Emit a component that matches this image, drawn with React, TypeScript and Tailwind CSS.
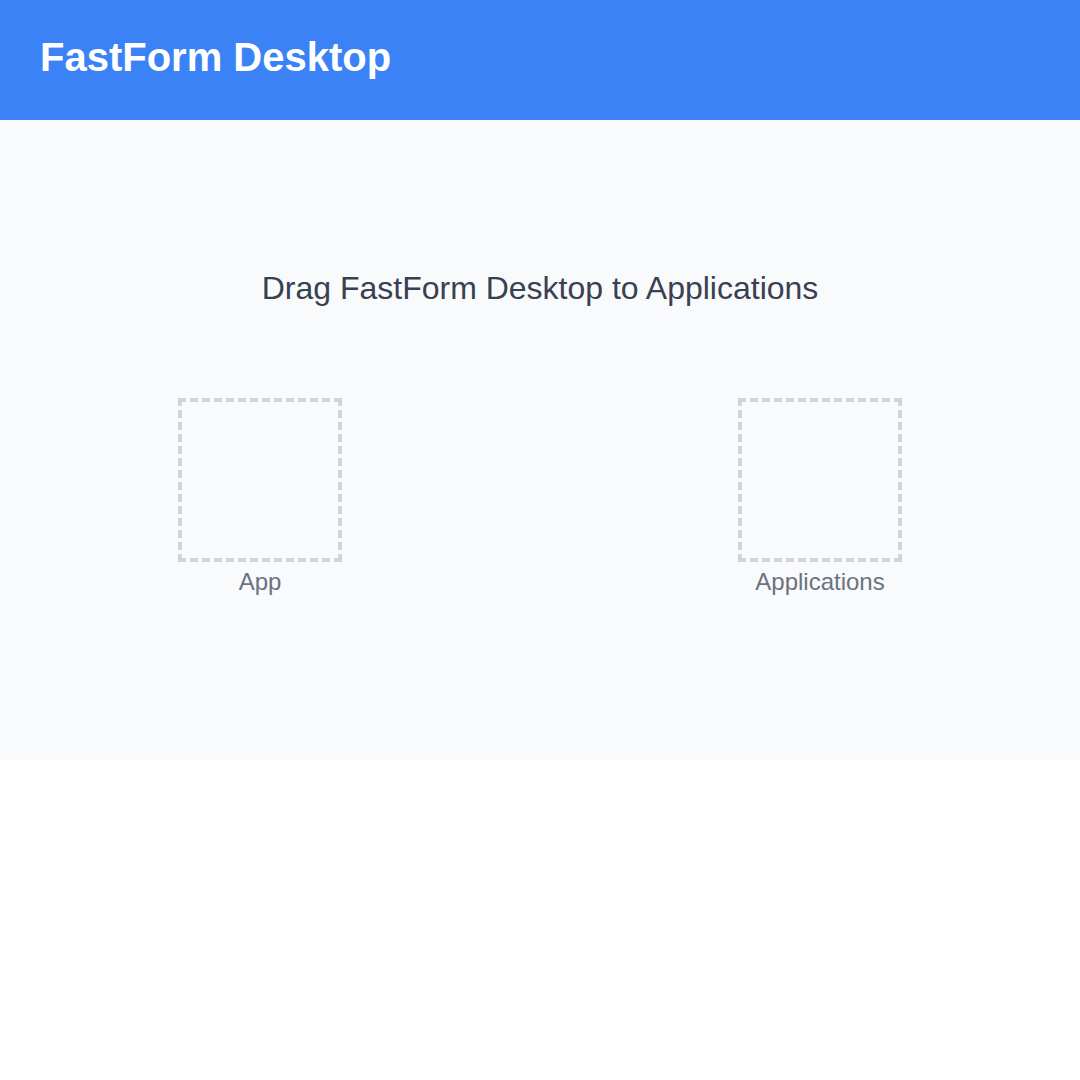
import React from "react";

function DropTarget({ label }: { label: string }) {
  return (
    <div className="flex flex-col items-center">
      <div className="w-[164px] h-[164px] border-4 border-dashed border-[#d1d5db]" />
      <span className="mt-1 text-2xl leading-8 text-[#6b7280]">{label}</span>
    </div>
  );
}

export default function App() {
  return (
    <div className="min-h-[1080px] bg-white" style={{ fontFamily: '"Liberation Sans", Arial, sans-serif' }}>
      {/* Header */}
      <header className="h-[120px] bg-[#3b82f6] flex items-center px-10">
        <h1 className="text-[40px] leading-[48px] font-bold text-white -mt-[6px]">FastForm Desktop</h1>
      </header>

      {/* Installer body */}
      <main className="h-[640px] bg-[#f9fafb] flex flex-col items-center pt-[148px]">
        <h2 className="text-[32px] leading-10 text-[#374151]">Drag FastForm Desktop to Applications</h2>
        <div className="mt-[90px] flex justify-center gap-[396px]">
          <DropTarget label="App" />
          <DropTarget label="Applications" />
        </div>
      </main>
    </div>
  );
}
